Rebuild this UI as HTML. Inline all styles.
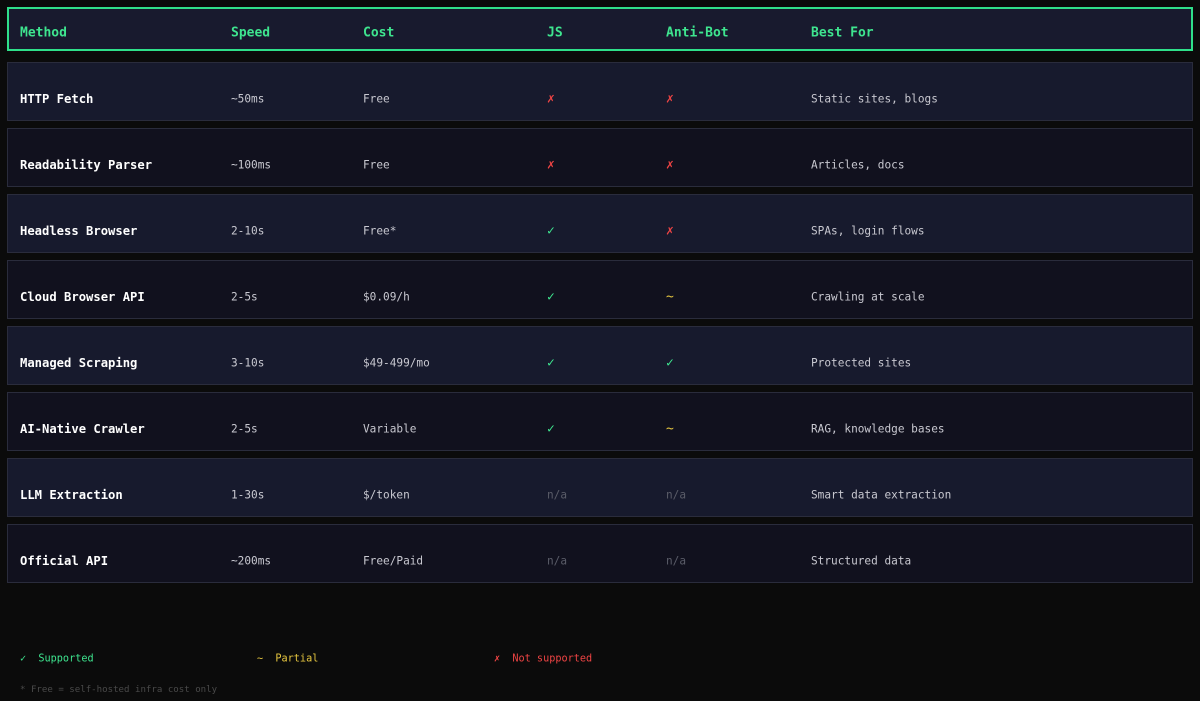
<!DOCTYPE html>
<html><head><style>
body{margin:0;background:#0b0b0b;width:1200px;height:701px;overflow:hidden;font-family:"DejaVu Sans Mono","Liberation Mono",monospace;position:relative}
.hdr{position:absolute;left:7px;top:7px;width:1182px;height:40px;border:2px solid #2fe08a;background:#181a2e}
.row{position:absolute;left:7px;width:1184px;height:57px;border:1px solid #2a2c3c}
.c{position:absolute;white-space:nowrap;transform:translateY(-50%)}
.h .c{color:#3ee58f;font-weight:bold;font-size:13px;top:24px}
.row .c{top:36px;font-size:11.1px;color:#c8c8d0}
.row .m{color:#fff;font-weight:bold;font-size:12.2px}
.row .s{font-size:13px}
.g{color:#3ee58f!important}.y{color:#e8c840!important}.r{color:#ef4444!important}.n{color:#5a5c68!important}
.leg{position:absolute;top:659px;font-size:10.2px;transform:translateY(-50%)}
</style></head><body>
<div class="hdr h"><span class="c" style="left:11px">Method</span><span class="c" style="left:222px">Speed</span><span class="c" style="left:354px">Cost</span><span class="c" style="left:538px">JS</span><span class="c" style="left:657px">Anti-Bot</span><span class="c" style="left:802px">Best For</span></div>
<div id="rows"></div>
<script>
const d=[["HTTP Fetch","~50ms","Free","r✗","r✗","Static sites, blogs"],["Readability Parser","~100ms","Free","r✗","r✗","Articles, docs"],["Headless Browser","2-10s","Free*","g✓","r✗","SPAs, login flows"],["Cloud Browser API","2-5s","$0.09/h","g✓","y~","Crawling at scale"],["Managed Scraping","3-10s","$49-499/mo","g✓","g✓","Protected sites"],["AI-Native Crawler","2-5s","Variable","g✓","y~","RAG, knowledge bases"],["LLM Extraction","1-30s","$/token","nn/a","nn/a","Smart data extraction"],["Official API","~200ms","Free/Paid","nn/a","nn/a","Structured data"]];
const xs=[12,223,355,539,658,803];let h="";
d.forEach((r,i)=>{h+=`<div class="row" style="top:${62+i*66}px;background:${i%2?'#11111e':'#171a2d'}">`;
r.forEach((t,j)=>{let cl=j==0?"m":"";if(j==3||j==4){cl=t[0];t=t.slice(1);if(cl!="n")cl+=" s";}h+=`<span class="c ${cl}" style="left:${xs[j]}px">${t}</span>`});h+="</div>"});
document.getElementById("rows").innerHTML=h;
</script>
<span class="leg" style="left:20px;color:#3ee58f">✓&nbsp; Supported</span>
<span class="leg" style="left:257px;color:#e8c840">~&nbsp; Partial</span>
<span class="leg" style="left:494px;color:#ef4444">✗&nbsp; Not supported</span>
<span class="leg" style="left:20px;top:690px;color:#4a4a4a;font-size:9.1px">* Free = self-hosted infra cost only</span>
</body></html>
